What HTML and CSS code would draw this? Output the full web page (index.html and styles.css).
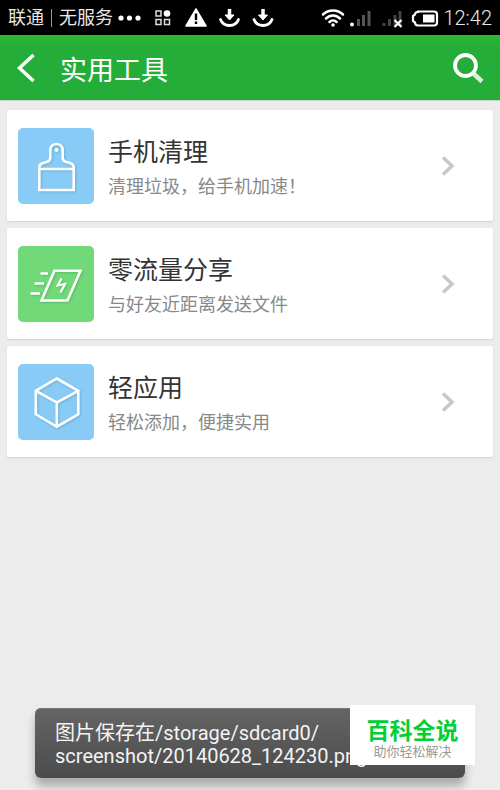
FILE: index.html
```html
<!DOCTYPE html>
<html lang="zh-CN">
<head>
<meta charset="utf-8">
<meta name="viewport" content="width=device-width, initial-scale=1">
<title>实用工具</title>
<link rel="stylesheet" href="styles.css">
</head>
<body>
<div class="status">
  <span class="carrier">联通</span>
  <span class="divider"></span>
  <span class="carrier">无服务</span>
  <svg class="notices" width="160" height="24" viewBox="0 0 160 24" aria-hidden="true">
    <g fill="#fff"><circle cx="4" cy="12" r="2.6"/><circle cx="12.500" cy="12" r="2.600"/><circle cx="21" cy="12" r="2.600"/></g>
    <g fill="none" stroke="#ddd" stroke-width="1.500"><path d="M39 5h5v5h-5zM39 13.500h5v5h-5zM47.500 13.500h5v5h-5z"/></g>
    <circle cx="50" cy="7.500" r="3.300" fill="#fff"/>
    <path d="M79 3 89 20H69z" fill="#fff" stroke="#fff" stroke-width="1.500" stroke-linejoin="round"/>
    <path d="M79 7.500v6.500M79 15.500v2.500" stroke="#000" stroke-width="2.400"/>
    <g id="down" fill="none" stroke="#fff" stroke-width="3.500"><path d="M112.500 3v7"/><path d="M108 9h9l-4.500 5z" fill="#fff" stroke-width="1"/><path d="M103.500 13.500c3 8 15 8 18 0" stroke-width="2.800" stroke-linecap="round"/></g>
    <use href="#down" x="33.500"/>
  </svg>
  <svg class="signals" width="118" height="24" viewBox="0 0 118 24" aria-hidden="true">
    <g fill="none" stroke="#fff" stroke-width="2.500" stroke-linecap="round"><path d="M2 8.500c5.500-5.500 14.500-5.500 20 0M5 12.500c4-4 10-4 14 0M8.500 16c2-2 5-2 7 0"/></g>
    <circle cx="12" cy="19" r="1.800" fill="#fff"/>
    <circle cx="31" cy="18.500" r="2" fill="#fff"/>
    <path d="M37.500 20v-7M42.500 20V9M48 20V5" stroke="#555" stroke-width="3"/>
    <path d="M63 20v-3M68.500 20v-7M74 20V9M79 20V5" stroke="#444" stroke-width="3"/>
    <path d="m73.500 14 7 7m0-7-7 7" stroke="#fff" stroke-width="2.200"/>
    <path d="M97 5.500h16q3 0 3 3v8q0 3-3 3H97q-3 0-3-3l-2-1.500v-5l2-1.500q0-2.500 3-2.500z" fill="none" stroke="#fff" stroke-width="2.200"/>
    <path d="M102 8.500h11.500v8H102z" fill="#fff"/>
  </svg>
  <time class="clock">12:42</time>
</div>
<header class="bar">
  <button class="icon-button" type="button" aria-label="返回">
    <svg width="20" height="30" viewBox="0 0 20 30"><path d="M17.500 2 3.500 15l14 13" fill="none" stroke="#fff" stroke-width="3.500"/></svg>
  </button>
  <h1 class="heading">实用工具</h1>
  <button class="icon-button" type="button" aria-label="搜索">
    <svg width="32" height="32" viewBox="0 0 32 32"><path d="m21.500 21.500 8.500 8" stroke="#dcefdc" stroke-width="4.500"/><circle cx="13.500" cy="13.500" r="10.500" fill="none" stroke="#fff" stroke-width="3.800"/></svg>
  </button>
</header>
<main class="list">
  <a class="card" href="#clean">
    <span class="tile blue">
      <svg width="76" height="76" viewBox="0 0 76 76" fill="none" stroke="#fff" stroke-width="2.600" aria-hidden="true"><path d="M21.300 62V39.500q0-3 3-4.200l5-1.600q3-1 3-4V22c0-8 12.400-8 12.400 0v7.700q0 3 3 4l5 1.600q3 1.200 3 4.200V62zM21.300 41h34.400"/><circle cx="38.500" cy="22" r="1.900" fill="#fff" stroke="none"/></svg>
    </span>
    <span class="text"><strong class="name">手机清理</strong><span class="note">清理垃圾，给手机加速！</span></span>
    <svg class="arrow" width="14" height="22" viewBox="0 0 14 22" aria-hidden="true"><path d="m2 2.500 9 8.500-9 8.500"/></svg>
  </a>
  <a class="card" href="#share">
    <span class="tile green">
      <svg width="76" height="76" viewBox="0 0 76 76" fill="none" stroke="#fff" stroke-width="2.600" aria-hidden="true"><path d="M36.500 24.700h26L49.500 54.500h-26z"/><path d="M22.500 27.500H30M16.500 37.500H26M12.500 47.500H22"/><path d="m43.500 32.500-3.800 7 7.300-1.500-4.500 8.500" stroke-width="2.200"/></svg>
    </span>
    <span class="text"><strong class="name">零流量分享</strong><span class="note">与好友近距离发送文件</span></span>
    <svg class="arrow" width="14" height="22" viewBox="0 0 14 22" aria-hidden="true"><path d="m2 2.500 9 8.500-9 8.500"/></svg>
  </a>
  <a class="card" href="#apps">
    <span class="tile blue">
      <svg width="76" height="76" viewBox="0 0 76 76" fill="none" stroke="#fff" stroke-width="2.600" aria-hidden="true"><path d="m38.800 14.500 21.500 12.300v23.500L38.800 62.700 17.800 50.300V26.800zM17.800 26.800l21 11.700 21.500-11.700M38.800 38.500v24"/></svg>
    </span>
    <span class="text"><strong class="name">轻应用</strong><span class="note">轻松添加，便捷实用</span></span>
    <svg class="arrow" width="14" height="22" viewBox="0 0 14 22" aria-hidden="true"><path d="m2 2.500 9 8.500-9 8.500"/></svg>
  </a>
</main>
<div class="toast" role="status">图片保存在/storage/sdcard0/<br>screenshot/20140628_124230.png</div>
<aside class="brand"><strong class="brand-name">百科全说</strong><span class="brand-note">助你轻松解决</span></aside>
</body>
</html>
```
FILE: styles.css
```css
* { box-sizing: border-box; }

body {
  margin: 0;
  min-height: 100vh;
  position: relative;
  background: #ececec;
  font-family: Roboto, "Noto Sans CJK SC", sans-serif;
}

.status {
  display: flex;
  align-items: center;
  height: 35px;
  padding: 0 8px;
  background: #000;
  color: #e8e8e8;
  white-space: nowrap;
}

.carrier { font-size: 18px; line-height: 24px; }

.divider {
  width: 1px;
  height: 18px;
  margin: 0 7px;
  background: #999;
}

.notices { flex: none; margin-left: 4px; }

.signals { flex: none; margin-left: auto; }

.clock {
  margin-left: 4px;
  font-size: 20px;
  font-weight: 300;
  line-height: 24px;
}

.bar {
  display: flex;
  align-items: center;
  height: 66px;
  padding: 0 16px;
  background: linear-gradient(#2db92f, #24ad38 10px);
  border-bottom: 1px solid #c5d8c5;
}

.icon-button {
  display: flex;
  padding: 0;
  border: 0;
  background: none;
}

.heading {
  flex: 1;
  margin: 0 0 0 24px;
  padding-top: 6px;
  color: #fff;
  font-size: 27px;
  font-weight: 400;
  line-height: 36px;
}

.list {
  display: grid;
  gap: 7px;
  padding: 9px 7px;
}

.card {
  display: flex;
  align-items: center;
  height: 111px;
  padding: 0 38px 0 11px;
  border-radius: 2px;
  background: #fff;
  box-shadow: 0 1px 2px #d0d0d0;
  text-decoration: none;
}

.tile {
  display: flex;
  border-radius: 5px;
}

.tile svg { filter: drop-shadow(1px 1px 1px rgb(0 70 70 / 20%)); }

.blue { background: #88cbf7; }

.green { background: #71d977; }

.text {
  display: flex;
  flex: 1;
  flex-direction: column;
  margin-left: 14px;
  padding-top: 6px;
}

.name {
  color: #333;
  font-size: 25px;
  font-weight: 400;
  line-height: 36px;
}

.note {
  color: #888;
  font-size: 18px;
  line-height: 32px;
}

.arrow {
  fill: none;
  stroke: #c8c8c8;
  stroke-width: 3.5;
}

.toast {
  position: absolute;
  right: 35px;
  bottom: 12px;
  left: 35px;
  padding: 14px 20px 10px;
  border-radius: 6px;
  background: linear-gradient(#656565, #4b4b4b);
  box-shadow: 0 8px 10px rgb(0 0 0 / 28%), inset 0 1px #777;
  color: #f4f4f4;
  font-size: 20px;
  line-height: 23px;
  white-space: nowrap;
}

.brand {
  position: absolute;
  right: 25px;
  bottom: 25px;
  display: flex;
  flex-direction: column;
  align-items: center;
  width: 125px;
  padding: 13px 0 7px;
  background: #fff;
}

.brand-name {
  color: #00cf36;
  font-size: 23px;
  font-weight: 700;
  line-height: 28px;
}

.brand-note {
  color: #999;
  font-size: 13px;
  line-height: 12px;
}
```
